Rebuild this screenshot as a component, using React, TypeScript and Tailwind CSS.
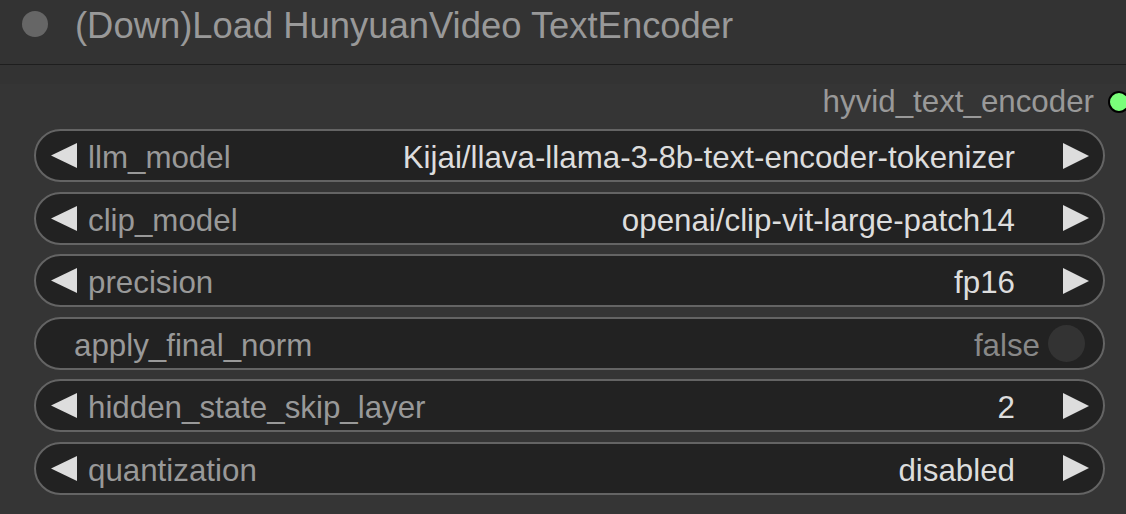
import React from "react";

const LeftArrow = () => (
  <svg width="26" height="25" viewBox="0 0 26 25" className="shrink-0">
    <polygon points="26,0 26,25 0,12.5" fill="#dddddd" />
  </svg>
);
const RightArrow = () => (
  <svg width="26" height="26" viewBox="0 0 26 26" className="shrink-0">
    <polygon points="0,0 0,26 26,13" fill="#dddddd" />
  </svg>
);

function Combo({ label, value }: { label: string; value: string }) {
  return (
    <div className="flex items-center h-[53px] w-[1071px] ml-[34px] rounded-full border-2 border-[#646464] bg-[#222222]">
      <div className="ml-[15px]"><LeftArrow /></div>
      <span className="ml-[11px] mt-[6px] text-[#999999]">{label}</span>
      <div className="flex-1" />
      <span className="mt-[6px] text-[#dddddd]">{value}</span>
      <div className="ml-[48px] mr-[14px]"><RightArrow /></div>
    </div>
  );
}

function Toggle({ label, value }: { label: string; value: string }) {
  return (
    <div className="flex items-center h-[53px] w-[1071px] ml-[34px] rounded-full border-2 border-[#646464] bg-[#222222]">
      <span className="ml-[38px] mt-[6px] text-[#999999]">{label}</span>
      <div className="flex-1" />
      <span className="mt-[6px] text-[#888888]">{value}</span>
      <div className="ml-[8px] mr-[18px] w-[37px] h-[37px] rounded-full bg-[#333333]" />
    </div>
  );
}

export default function App() {
  return (
    <div
      className="w-[1126px] h-[514px] overflow-hidden bg-[#353535] text-[31.3px]"
      style={{ fontFamily: '"Liberation Sans", Arial, sans-serif' }}
    >
      <div className="h-[65px] bg-[#333333] border-b border-[#1e1e1e] flex items-start pt-[3px]">
        <div className="ml-[22px] mt-[8px] w-[26px] h-[26px] rounded-full bg-[#666666]" />
        <span className="ml-[27px] mt-[2px] text-[36.4px] leading-[41px] text-[#999999]">
          (Down)Load HunyuanVideo TextEncoder
        </span>
      </div>
      <div className="h-[19px] bg-[#333333]" />
      <div className="flex items-center justify-end h-[36px] leading-[36px]">
        <span className="text-[#999999]">hyvid_text_encoder</span>
        <div className="ml-[14px] mr-[-4px] w-[22px] h-[22px] rounded-full bg-[#7aff7a] border-2 border-black shrink-0" />
      </div>
      <div className="flex flex-col gap-[9.5px] mt-[9px]">
        <Combo label="llm_model" value="Kijai/llava-llama-3-8b-text-encoder-tokenizer" />
        <Combo label="clip_model" value="openai/clip-vit-large-patch14" />
        <Combo label="precision" value="fp16" />
        <Toggle label="apply_final_norm" value="false" />
        <Combo label="hidden_state_skip_layer" value="2" />
        <Combo label="quantization" value="disabled" />
      </div>
    </div>
  );
}
